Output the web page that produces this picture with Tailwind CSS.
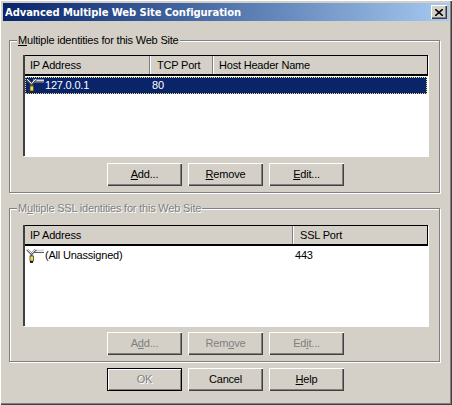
<!DOCTYPE html>
<html>
<head>
<meta charset="utf-8">
<script src="https://cdn.jsdelivr.net/npm/@tailwindcss/browser@4"></script>
</head>
<body class="m-0 overflow-hidden bg-[#d4d0c8]">
<svg width="0" height="0" class="absolute">
  <symbol id="net" viewBox="0 0 18 16">
    <path d="M7 2.500H18" stroke="#d8d8d8" stroke-width="2" fill="none"/>
    <path d="M7 4.500H18" stroke="#606060" stroke-width="1" fill="none"/>
    <path d="M1 1.500L5.500 6L10 1.500M5.500 6V13" stroke="#606060" stroke-width="2.200" fill="none"/>
    <path d="M1 1L5.500 5.500L10 1" stroke="#f0f0f0" stroke-width="1" fill="none"/>
    <rect x="4" y="8" width="3.500" height="5" fill="#f2e33c" stroke="#444" stroke-width=".8"/>
    <rect x="4" y="13" width="3" height="2" fill="#222"/>
  </symbol>
</svg>
<div class="w-[452px] h-[405px] flex flex-col px-[3px] pt-[3px] bg-[#d4d0c8] font-['Liberation_Sans',Arial,sans-serif] text-[11px] leading-[13px] tracking-[-0.2px] text-black shadow-[inset_1px_1px_0_#fff,inset_-1px_-1px_0_#404040,inset_-2px_-2px_0_#808080]">
  <div class="h-[18px] flex items-center justify-between pl-[2px] pr-[2px] bg-gradient-to-r from-[#0a246a] to-[#a6caf0] shrink-0">
    <span class="font-['DejaVu_Sans',sans-serif] font-bold text-[10px] tracking-[-0.08px] text-white">Advanced Multiple Web Site Configuration</span>
    <span class="w-[16px] h-[14px] flex items-center justify-center bg-[#d4d0c8] shadow-[inset_1px_1px_0_#fff,inset_-1px_-1px_0_#404040,inset_-2px_-2px_0_#808080]">
      <svg width="8" height="7" viewBox="0 0 8 7"><path d="M0 0L8 7M8 0L0 7" stroke="#000" stroke-width="1.600"/></svg>
    </span>
  </div>

  <fieldset class="ml-[6px] mr-[9px] mt-[12px] h-[160px] border border-[#808080] pl-[13px] pr-[11px] pt-[8px] shadow-[inset_1px_1px_0_#fff,1px_1px_0_#fff] shrink-0">
    <legend class="ml-[-6px] px-[1px] pt-px h-[14px] bg-[#d4d0c8]"><u>M</u>ultiple identities for this Web Site</legend>
    <div class="w-[405px] h-[101px] flex flex-col bg-white border-l-2 border-[#404040] shadow-[1px_1px_0_#fff]">
      <div class="h-[21px] flex bg-[#d4d0c8] border-t border-r border-b-2 border-black shrink-0">
        <div class="w-[125px] pl-[5px] flex items-center border-r border-[#808080] shadow-[1px_0_0_#fff]">IP Address</div>
        <div class="w-[63px] pl-[7px] flex items-center border-r border-[#808080] shadow-[1px_0_0_#fff]">TCP Port</div>
        <div class="pl-[6px] flex items-center">Host Header Name</div>
      </div>
      <div class="mt-px h-[17px] flex items-center bg-[#0a246a] text-white border border-dotted border-[#f0d878] mr-px">
        <svg class="w-[18px] h-[16px] mr-px shrink-0"><use href="#net"/></svg>
        <span class="w-[107px]">127.0.0.1</span>
        <span>80</span>
      </div>
    </div>
    <div class="flex gap-[6px] mt-[7px] ml-[84px]">
      <button class="w-[75px] h-[23px] bg-[#d4d0c8] shadow-[inset_1px_1px_0_#fff,inset_-1px_-1px_0_#404040,inset_-2px_-2px_0_#808080]"><u>A</u>dd...</button>
      <button class="w-[75px] h-[23px] bg-[#d4d0c8] shadow-[inset_1px_1px_0_#fff,inset_-1px_-1px_0_#404040,inset_-2px_-2px_0_#808080]"><u>R</u>emove</button>
      <button class="w-[75px] h-[23px] bg-[#d4d0c8] shadow-[inset_1px_1px_0_#fff,inset_-1px_-1px_0_#404040,inset_-2px_-2px_0_#808080]"><u>E</u>dit...</button>
    </div>
  </fieldset>

  <fieldset class="ml-[6px] mr-[9px] mt-[8px] h-[161px] border border-[#808080] pl-[13px] pr-[11px] pt-[10px] shadow-[inset_1px_1px_0_#fff,1px_1px_0_#fff] shrink-0">
    <legend class="ml-[-6px] px-[1px] pt-px h-[14px] bg-[#d4d0c8] text-[#808080] [text-shadow:1px_1px_0_#fff]">M<u>u</u>ltiple SSL identities for this Web Site</legend>
    <div class="w-[405px] h-[101px] flex flex-col bg-white border-l-2 border-[#404040] shadow-[1px_1px_0_#fff]">
      <div class="h-[21px] flex bg-[#d4d0c8] border-t border-r border-b-2 border-black shrink-0">
        <div class="w-[268px] pl-[5px] flex items-center border-r border-[#808080] shadow-[1px_0_0_#fff]">IP Address</div>
        <div class="pl-[7px] flex items-center">SSL Port</div>
      </div>
      <div class="mt-px h-[17px] flex items-center border border-transparent">
        <svg class="w-[18px] h-[16px] mr-px shrink-0"><use href="#net"/></svg>
        <span class="w-[250px]">(All Unassigned)</span>
        <span>443</span>
      </div>
    </div>
    <div class="flex gap-[6px] mt-[6px] ml-[84px] text-[#808080] [text-shadow:1px_1px_0_#fff]">
      <button class="w-[75px] h-[23px] bg-[#d4d0c8] shadow-[inset_1px_1px_0_#fff,inset_-1px_-1px_0_#404040,inset_-2px_-2px_0_#808080]">A<u>d</u>d...</button>
      <button class="w-[75px] h-[23px] bg-[#d4d0c8] shadow-[inset_1px_1px_0_#fff,inset_-1px_-1px_0_#404040,inset_-2px_-2px_0_#808080]">Rem<u>o</u>ve</button>
      <button class="w-[75px] h-[23px] bg-[#d4d0c8] shadow-[inset_1px_1px_0_#fff,inset_-1px_-1px_0_#404040,inset_-2px_-2px_0_#808080]">Ed<u>i</u>t...</button>
    </div>
  </fieldset>

  <div class="flex gap-[6px] mt-[6px] ml-[104px]">
    <button class="w-[75px] h-[23px] bg-[#d4d0c8] border border-black text-[#808080] [text-shadow:1px_1px_0_#fff] shadow-[inset_1px_1px_0_#fff,inset_-1px_-1px_0_#808080]">OK</button>
    <button class="w-[75px] h-[23px] bg-[#d4d0c8] shadow-[inset_1px_1px_0_#fff,inset_-1px_-1px_0_#404040,inset_-2px_-2px_0_#808080]">Cancel</button>
    <button class="w-[75px] h-[23px] bg-[#d4d0c8] shadow-[inset_1px_1px_0_#fff,inset_-1px_-1px_0_#404040,inset_-2px_-2px_0_#808080]"><u>H</u>elp</button>
  </div>
</div>
</body>
</html>
